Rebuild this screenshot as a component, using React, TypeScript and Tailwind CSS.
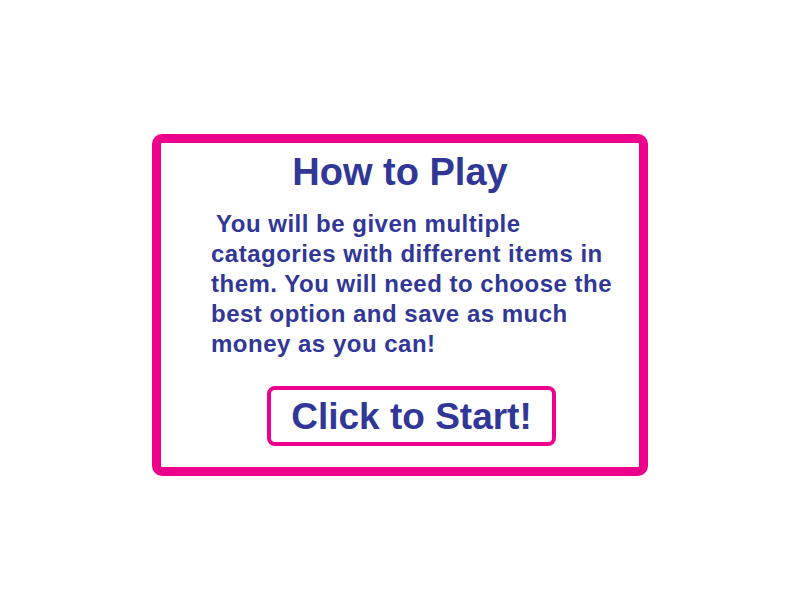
import React from 'react';

export default function App() {
  return (
    <div className="min-h-[600px] w-full bg-white pt-[134px] font-['Liberation_Sans',Arial,sans-serif]">
      <div className="mx-auto flex w-[496px] flex-col rounded-[10px] border-[9px] border-[#ec008c] bg-white pt-[7px] pb-[21px]">
        <h1 className="text-center text-[38px] leading-[44px] font-bold text-[#313797]">How to Play</h1>

        <p className="mt-[15px] ml-[50px] w-[415px] text-[24px] leading-[30px] font-bold tracking-[0.5px] text-[#313797] indent-[5px]">
          You will be given multiple catagories with different items in them. You will need to choose the best option and save as much money as you can!
        </p>

        <button className="mt-[27px] ml-[106px] h-[60px] w-[289px] rounded-[8px] border-4 border-[#ec008c] bg-white pt-[2px] text-[37px] leading-[50px] font-bold text-[#313797]">
          Click to Start!
        </button>
      </div>
    </div>
  );
}
